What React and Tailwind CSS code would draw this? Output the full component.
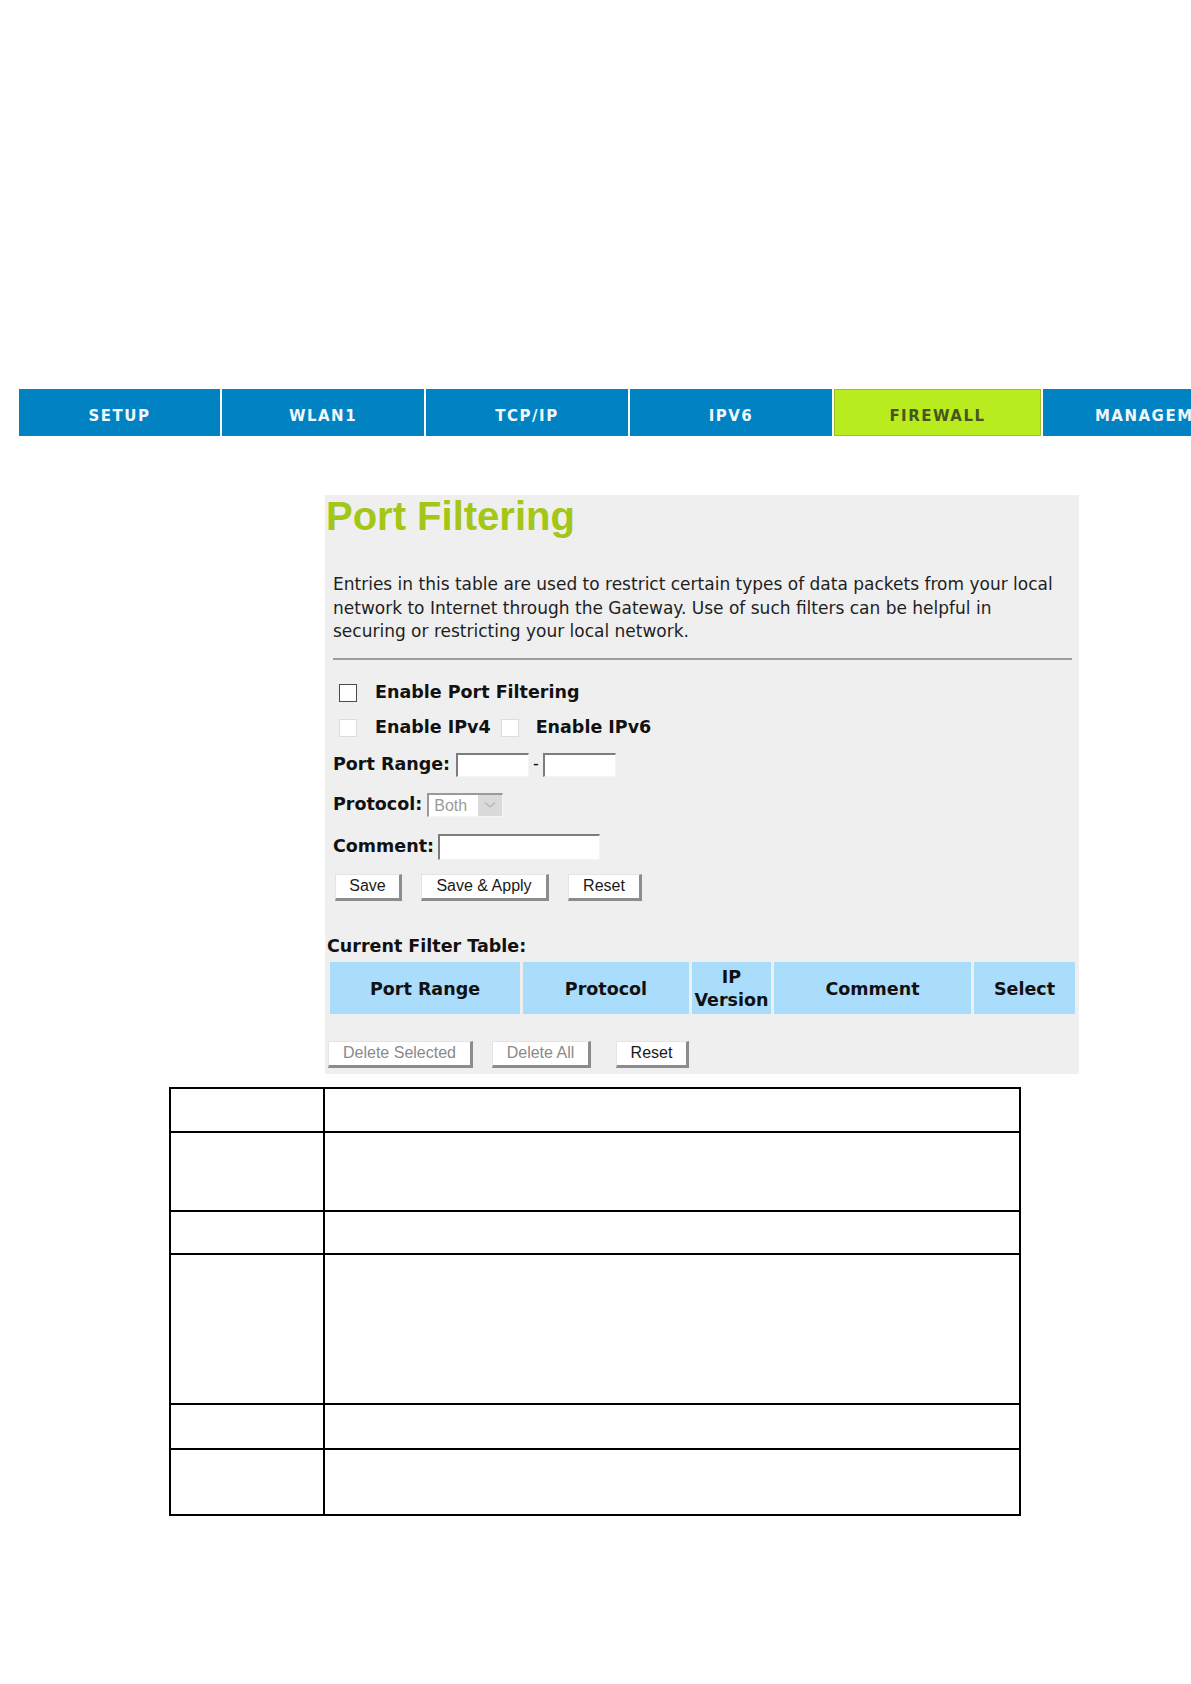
import React from "react";

const tabs = [
  { label: "SETUP", w: "w-[201px]" },
  { label: "WLAN1", w: "w-[202px]" },
  { label: "TCP/IP", w: "w-[202px]" },
  { label: "IPV6", w: "w-[202px]" },
  { label: "FIREWALL", w: "w-[207px]", active: true },
  { label: "MANAGEMENT", w: "w-[240px]" },
];

const lbl = { fontFamily: '"DejaVu Sans", Verdana, sans-serif' };
const reg = { fontFamily: '"Liberation Sans", Arial, sans-serif' };

function Btn({ children, w, disabled }) {
  return (
    <div
      className={`${w} h-[27px] flex items-center justify-center bg-white border-t border-l border-t-[#e4e4e4] border-l-[#e4e4e4] border-r-[3px] border-b-[3px] border-r-[#8c8c8c] border-b-[#8c8c8c] text-[16px] ${disabled ? "text-[#8a8a8a]" : "text-[#1a1a1a]"}`}
      style={reg}
    >
      {children}
    </div>
  );
}

function Input({ w }) {
  return (
    <div
      className={`${w} h-[24px] bg-white border-t-2 border-l-2 border-t-[#7d7d7d] border-l-[#7d7d7d] border-r border-b border-r-[#f4f4f4] border-b-[#f4f4f4]`}
    />
  );
}

export default function App() {
  const rows = [44, 79, 43, 150, 45, 66];
  return (
    <div className="w-[1191px] h-[1684px] bg-white overflow-hidden">
      <div className="pt-[389px] pl-[19px] flex gap-[2px] w-[1300px]">
        {tabs.map((t) => (
          <div
            key={t.label}
            className={`${t.w} shrink-0 h-[47px] flex items-center justify-center text-[15px] font-bold tracking-[1.5px] pt-[7px] ${
              t.active
                ? "bg-[#b8ec1e] text-[#46561c] border border-[#9cc41e]"
                : "bg-[#0082c3] text-[#f2f7fb]"
            }`}
            style={lbl}
          >
            {t.label}
          </div>
        ))}
      </div>

      <div className="ml-[325px] mt-[59px] w-[754px] h-[579px] bg-[#efefef] flex flex-col">
        <h1
          className="text-[40px] leading-[40px] font-bold text-[#a3c617] ml-[1px] mt-[1px]"
          style={reg}
        >
          Port Filtering
        </h1>
        <p
          className="mt-[37px] ml-[8px] w-[732px] text-[17px] leading-[23.5px] text-[#1e1e1e]"
          style={lbl}
        >
          Entries in this table are used to restrict certain types of data packets from your local
          network to Internet through the Gateway. Use of such filters can be helpful in securing or
          restricting your local network.
        </p>
        <div className="mt-[14px] ml-[8px] mr-[7px] h-[2px] bg-[#9e9e9e]" />

        <div className="mt-[20px] ml-[14px] h-[26px] flex items-center text-[17.5px] font-bold text-[#111]" style={lbl}>
          <div className="w-[18px] h-[18px] bg-white border-[1.5px] border-[#4a4a4a]" />
          <span className="ml-[18px]">Enable Port Filtering</span>
        </div>

        <div className="mt-[9px] ml-[14px] h-[26px] flex items-center text-[17.5px] font-bold text-[#111]" style={lbl}>
          <div className="w-[18px] h-[18px] bg-white border border-[#dcdcdc]" />
          <span className="ml-[18px]">Enable IPv4</span>
          <div className="ml-[10px] w-[18px] h-[18px] bg-white border border-[#dcdcdc]" />
          <span className="ml-[17px]">Enable IPv6</span>
        </div>

        <div className="mt-[12px] ml-[8px] h-[24px] flex items-center text-[17.5px] font-bold text-[#111]" style={lbl}>
          <span>Port Range:</span>
          <div className="ml-[6px]"><Input w="w-[73px]" /></div>
          <span className="mx-[4px] font-normal" style={reg}>-</span>
          <Input w="w-[73px]" />
        </div>

        <div className="mt-[16px] ml-[8px] h-[24px] flex items-center text-[17.5px] font-bold text-[#111]" style={lbl}>
          <span>Protocol:</span>
          <div className="ml-[5px] w-[76px] h-[24px] flex bg-white border-t-2 border-l-2 border-t-[#9a9a9a] border-l-[#9a9a9a] border-r border-b border-r-[#f4f4f4] border-b-[#f4f4f4]">
            <span className="flex-1 pl-[5px] text-[16px] font-normal text-[#9a9a9a] leading-[22px]" style={reg}>Both</span>
            <span className="w-[24px] h-full bg-[#dadada] flex items-center justify-center">
              <svg width="12" height="8" viewBox="0 0 12 8">
                <path d="M1 1.5 L6 6 L11 1.5" fill="none" stroke="#b5b5b5" strokeWidth="1.3" />
              </svg>
            </span>
          </div>
        </div>

        <div className="mt-[17px] ml-[8px] h-[26px] flex items-center text-[17.5px] font-bold text-[#111]" style={lbl}>
          <span>Comment:</span>
          <div className="ml-[4px]">
            <div className="w-[162px] h-[26px] bg-white border-t-2 border-l-2 border-t-[#7d7d7d] border-l-[#7d7d7d] border-r border-b border-r-[#f4f4f4] border-b-[#f4f4f4]" />
          </div>
        </div>

        <div className="mt-[14px] ml-[10px] flex gap-[19px]">
          <Btn w="w-[67px]">Save</Btn>
          <Btn w="w-[128px]">Save &amp; Apply</Btn>
          <Btn w="w-[74px]">Reset</Btn>
        </div>

        <div className="mt-[36px] ml-[2px] h-[20px] flex items-center text-[17.5px] font-bold text-[#111]" style={lbl}>
          Current Filter Table:
        </div>

        <div
          className="mt-[5px] ml-[5px] w-[745px] h-[52px] grid grid-cols-[190px_166px_79px_197px_101px] gap-[3px] text-[17.5px] font-bold text-[#111]"
          style={lbl}
        >
          <div className="bg-[#aadcfb] flex items-center justify-center pt-[3px]">Port Range</div>
          <div className="bg-[#aadcfb] flex items-center justify-center pt-[3px]">Protocol</div>
          <div className="bg-[#aadcfb] flex flex-col items-center justify-center leading-[23px] pt-[3px]">
            <span>IP</span>
            <span>Version</span>
          </div>
          <div className="bg-[#aadcfb] flex items-center justify-center pt-[3px]">Comment</div>
          <div className="bg-[#aadcfb] flex items-center justify-center pt-[3px]">Select</div>
        </div>

        <div className="mt-[27px] ml-[3px] flex">
          <Btn w="w-[145px]" disabled>Delete Selected</Btn>
          <div className="ml-[19px]"><Btn w="w-[99px]" disabled>Delete All</Btn></div>
          <div className="ml-[25px]"><Btn w="w-[73px]">Reset</Btn></div>
        </div>
      </div>

      <table className="ml-[169px] mt-[13px] w-[852px] border-collapse">
        <tbody>
          {rows.map((h, i) => (
            <tr key={i} style={{ height: h }}>
              <td className="w-[154px] border-2 border-black p-0"></td>
              <td className="border-2 border-black p-0"></td>
            </tr>
          ))}
        </tbody>
      </table>
    </div>
  );
}
